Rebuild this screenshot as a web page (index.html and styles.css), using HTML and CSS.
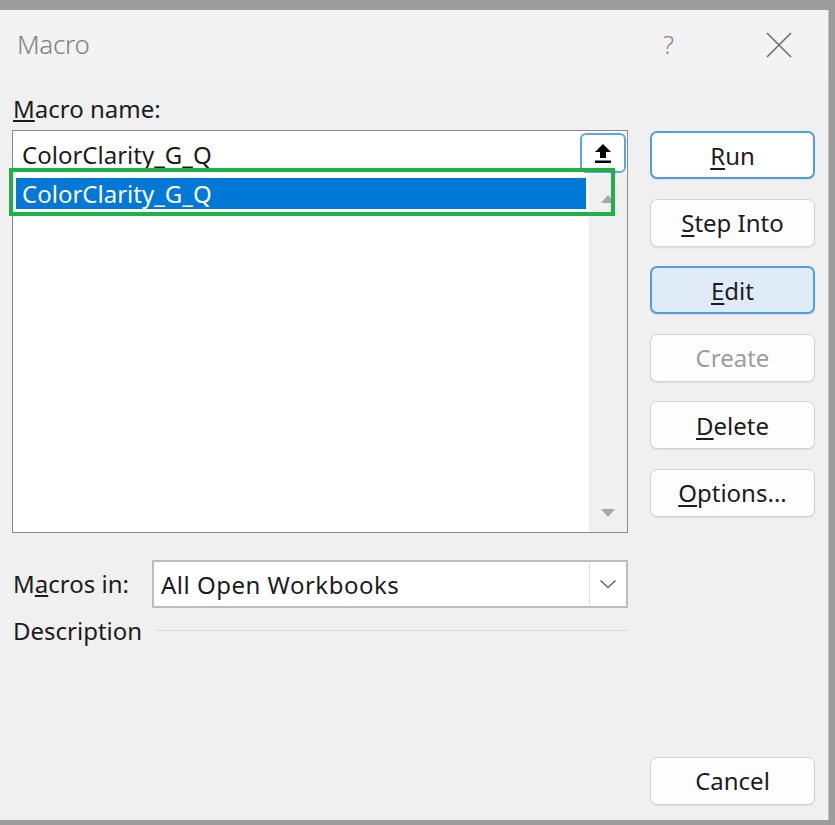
FILE: index.html
```html
<!DOCTYPE html>
<html>
<head>
<meta charset="utf-8">
<link rel="stylesheet" href="styles.css">
</head>
<body>
<div class="dialog">
  <div class="titlebar">
    <span class="title">Macro</span>
    <span class="help">?</span>
    <span class="close">
      <svg width="26" height="26" viewBox="0 0 26 26"><path d="M1 1 L25 25 M25 1 L1 25" stroke="#6e6e6e" stroke-width="1.6" fill="none"/></svg>
    </span>
  </div>
  <div class="main">
    <div class="left">
      <div class="label"><u>M</u>acro name:</div>
      <div class="combo">
        <div class="inputrow">
          <span class="inputtext">ColorClarity_G_Q</span>
          <span class="upbtn">
            <svg width="20" height="22" viewBox="0 0 20 22"><path d="M10 2 L2 10 H7 V16 H13 V10 H18 Z" fill="#000"/><rect x="2" y="18.5" width="16" height="2.5" fill="#000"/></svg>
          </span>
        </div>
        <div class="listarea">
          <div class="items">
            <div class="item selected">ColorClarity_G_Q</div>
          </div>
          <div class="scrollbar">
            <svg class="arrow" width="16" height="10" viewBox="0 0 16 10"><path d="M8 1 L15 9 H1 Z" fill="#a6a6a6"/></svg>
            <svg class="arrow" width="16" height="10" viewBox="0 0 16 10"><path d="M1 1 H15 L8 9 Z" fill="#a6a6a6"/></svg>
          </div>
        </div>
        <div class="highlight"></div>
      </div>
      <div class="inrow">
        <span class="label">M<u>a</u>cros in:</span>
        <div class="select">
          <span class="selecttext">All Open Workbooks</span>
          <span class="dropbtn">
            <svg width="18" height="10" viewBox="0 0 18 10"><path d="M1.5 1.5 L9 8.5 L16.5 1.5" stroke="#6a6a6a" stroke-width="1.6" fill="none"/></svg>
          </span>
        </div>
      </div>
      <div class="descrow">
        <span class="label">Description</span>
        <span class="rule"></span>
      </div>
    </div>
    <div class="right">
      <div class="btn default"><u>R</u>un</div>
      <div class="btn"><u>S</u>tep Into</div>
      <div class="btn focused"><u>E</u>dit</div>
      <div class="btn disabled">Create</div>
      <div class="btn"><u>D</u>elete</div>
      <div class="btn"><u>O</u>ptions...</div>
      <div class="btn cancel">Cancel</div>
    </div>
  </div>
</div>
</body>
</html>
```

FILE: styles.css
```css
html, body {
  margin: 0;
  padding: 0;
}
body {
  background: #9c9c9c;
  width: 835px;
  height: 825px;
  overflow: hidden;
  font-family: "Noto Sans", "Open Sans", sans-serif;
  color: #1c1c1c;
}
.dialog {
  margin-top: 10px;
  width: 829px;
  height: 810px;
  background: #f0f0f0;
  border-right: 1px solid #c4c4c4;
  box-sizing: border-box;
  display: flex;
  flex-direction: column;
}
.titlebar {
  height: 70px;
  background: #f3f3f3;
  display: flex;
  align-items: center;
  padding-left: 17px;
  box-sizing: border-box;
}
.title {
  font-size: 26px;
  font-weight: 300;
  color: #808080;
  flex: 1;
  margin-top: -2px;
  letter-spacing: -0.3px;
}
.help {
  font-size: 26px;
  font-weight: 300;
  color: #8a8a8a;
  margin-right: 92px;
  margin-top: -2px;
}
.close {
  display: flex;
  margin-right: 36px;
}
.main {
  display: flex;
  padding-left: 12px;
  flex: 1;
}
.left {
  width: 616px;
  display: flex;
  flex-direction: column;
}
.label {
  font-size: 24px;
  line-height: 30px;
  color: #1c1c1c;
}
.left > .label {
  margin-top: 14px;
  margin-left: 1px;
}
.combo {
  position: relative;
  margin-top: 6px;
  height: 403px;
  border: 1px solid #8a8a8a;
  background: #fff;
  box-sizing: border-box;
  display: flex;
  flex-direction: column;
}
.inputrow {
  height: 43px;
  display: flex;
  align-items: center;
  padding-left: 9px;
  padding-right: 1px;
}
.inputtext {
  flex: 1;
  font-size: 24px;
  margin-top: 4px;
}
.upbtn {
  width: 46px;
  height: 40px;
  border: 2px solid #5aa6e8;
  border-radius: 6px;
  box-sizing: border-box;
  display: flex;
  align-items: center;
  justify-content: center;
  background: #fff;
}
.listarea {
  flex: 1;
  display: flex;
}
.items {
  flex: 1;
  padding: 4px 3px 0 3px;
}
.item {
  height: 31px;
  line-height: 31px;
  font-size: 24px;
  padding-left: 6px;
}
.item.selected {
  background: #0078d7;
  color: #fff;
}
.scrollbar {
  width: 38px;
  background: #f0f0f0;
  display: flex;
  flex-direction: column;
  justify-content: space-between;
  align-items: center;
  padding: 20px 0 14px;
  box-sizing: border-box;
}
.highlight {
  position: absolute;
  left: -4px;
  top: 37px;
  width: 606px;
  height: 48px;
  border: 4px solid #20b04a;
  box-sizing: border-box;
}
.inrow {
  margin-top: 27px;
  display: flex;
  align-items: center;
}
.inrow .label {
  width: 139px;
  margin-left: 1px;
}
.select {
  flex: 1;
  height: 48px;
  border: 2px solid #bdbdbd;
  background: #fff;
  box-sizing: border-box;
  display: flex;
  align-items: center;
  padding-left: 7px;
}
.selecttext {
  flex: 1;
  font-size: 24px;
  letter-spacing: 0.5px;
}
.dropbtn {
  width: 36px;
  height: 44px;
  border-left: 1px solid #e2e2e2;
  display: flex;
  align-items: center;
  justify-content: center;
}
.descrow {
  margin-top: 8px;
  display: flex;
  align-items: center;
}
.descrow .label {
  margin-left: 1px;
}
.rule {
  flex: 1;
  margin-left: 14px;
  border-top: 1px solid #d9d9d9;
  margin-top: -2px;
}
.right {
  margin-left: 22px;
  padding-top: 51px;
  width: 165px;
  display: flex;
  flex-direction: column;
  gap: 19.6px;
}
.btn {
  height: 48px;
  box-sizing: border-box;
  border: 1px solid #d3d3d3;
  border-radius: 7px;
  background: #fdfdfd;
  box-shadow: 0 1px 1px rgba(0,0,0,0.08);
  display: flex;
  align-items: center;
  justify-content: center;
  font-size: 24px;
  color: #1c1c1c;
}
.btn u {
  text-underline-offset: 3px;
}
.btn.default {
  border: 2px solid #4d9fe3;
  background: #fff;
}
.btn.focused {
  border: 2px solid #4d9fe3;
  background: #dfecf8;
}
.btn.disabled {
  color: #9e9e9e;
}
.btn.cancel {
  margin-top: 220.4px;
}
```
